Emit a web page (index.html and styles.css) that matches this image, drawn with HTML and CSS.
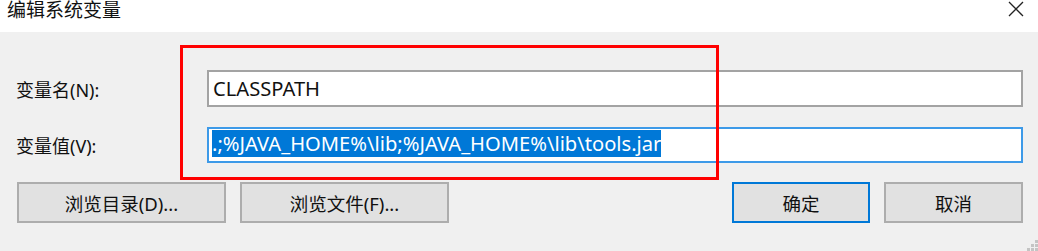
FILE: index.html
```html
<!DOCTYPE html>
<html lang="zh-CN">
<head>
  <meta charset="UTF-8" />
  <title>编辑系统变量</title>
  <link rel="stylesheet" href="styles.css">
</head>
<body>

  <div class="dialog">
    <div class="titlebar">
      <span class="title">编辑系统变量</span>
      <svg class="close" width="16" height="16" viewBox="0 0 16 16">
        <path d="M1 1 L15 15 M15 1 L1 15" stroke="#222" stroke-width="1.3" fill="none"/>
      </svg>
    </div>

    <div class="content">
      <div class="row">
        <label for="name">变量名(N):</label>
        <div class="field" id="name">CLASSPATH</div>
      </div>

      <div class="row">
        <label for="value">变量值(V):</label>
        <div class="field focused" id="value"><span class="selected">.;%JAVA_HOME%\lib;%JAVA_HOME%\lib\tools.jar</span></div>
      </div>

      <div class="buttons">
        <button class="btn wide">浏览目录(D)...</button>
        <button class="btn wide">浏览文件(F)...</button>
        <span class="spacer"></span>
        <button class="btn default">确定</button>
        <button class="btn">取消</button>
      </div>

      <!-- annotation box drawn over the dialog -->
      <div class="mark"></div>

      <svg class="grip" width="12" height="12" viewBox="0 0 12 12">
        <rect x="9" y="1" width="3" height="3" fill="#c4c4c4"/>
        <rect x="5" y="5" width="3" height="3" fill="#c4c4c4"/>
        <rect x="9" y="5" width="3" height="3" fill="#c4c4c4"/>
        <rect x="1" y="9" width="3" height="3" fill="#c4c4c4"/>
        <rect x="5" y="9" width="3" height="3" fill="#c4c4c4"/>
        <rect x="9" y="9" width="3" height="3" fill="#c4c4c4"/>
      </svg>
    </div>
  </div>

</body>
</html>
```

FILE: styles.css
```css
* {
  box-sizing: border-box;
}
body {
  margin: 0;
  padding: 0;
  font-family: 'Noto Sans', 'Noto Sans CJK SC', sans-serif;
  color: #000;
  background-color: #f0f0f0;
}

.dialog {
  width: 1038px;
  height: 251px;
  overflow: hidden;
}

.titlebar {
  height: 32px;
  background-color: #fff;
  display: flex;
  align-items: flex-start;
  justify-content: space-between;
  padding: 0 14px 0 7px;
}
.title {
  font-size: 19px;
  line-height: 20px;
  color: #111;
}
.close {
  margin-top: 1px;
}

.content {
  position: relative;
  height: 219px;
  background-color: #f0f0f0;
  padding: 38px 15px 0 16px;
}

.row {
  display: flex;
  align-items: center;
  height: 37px;
  margin-bottom: 19px;
}
.row label {
  width: 191px;
  font-size: 18px;
  color: #111;
}

.field {
  flex: 1;
  height: 37px;
  background-color: #fff;
  border: 2px solid #a3a3a3;
  padding-left: 4px;
  font-size: 20.15px;
  line-height: 33px;
  white-space: nowrap;
  color: #111;
}
.field.focused {
  height: 36px;
  border-color: #3d9ae8;
  padding-left: 3px;
  line-height: 32px;
}
.selected {
  display: inline-block;
  background-color: #0078d7;
  color: #fff;
  height: 27px;
  line-height: 27px;
  vertical-align: top;
  margin-top: 1px;
}

.buttons {
  display: flex;
  margin-top: 9px;
  margin-left: 1px;
}
.spacer {
  flex: 1;
}
.btn {
  height: 41px;
  width: 139px;
  margin-right: 14px;
  background-color: #e1e1e1;
  border: 2px solid #adadad;
  font-family: 'Noto Sans', 'Noto Sans CJK SC', sans-serif;
  font-size: 18.5px;
  color: #111;
  padding: 0;
}
.btn:last-child {
  margin-right: 0;
}
.btn.wide {
  width: 209px;
}
.btn.default {
  width: 138px;
  border: 2px solid #0078d7;
}

.mark {
  position: absolute;
  left: 180px;
  top: 13px;
  width: 539px;
  height: 135px;
  border: 3px solid #ff0000;
}

.grip {
  position: absolute;
  right: 0;
  bottom: 0;
}
```
